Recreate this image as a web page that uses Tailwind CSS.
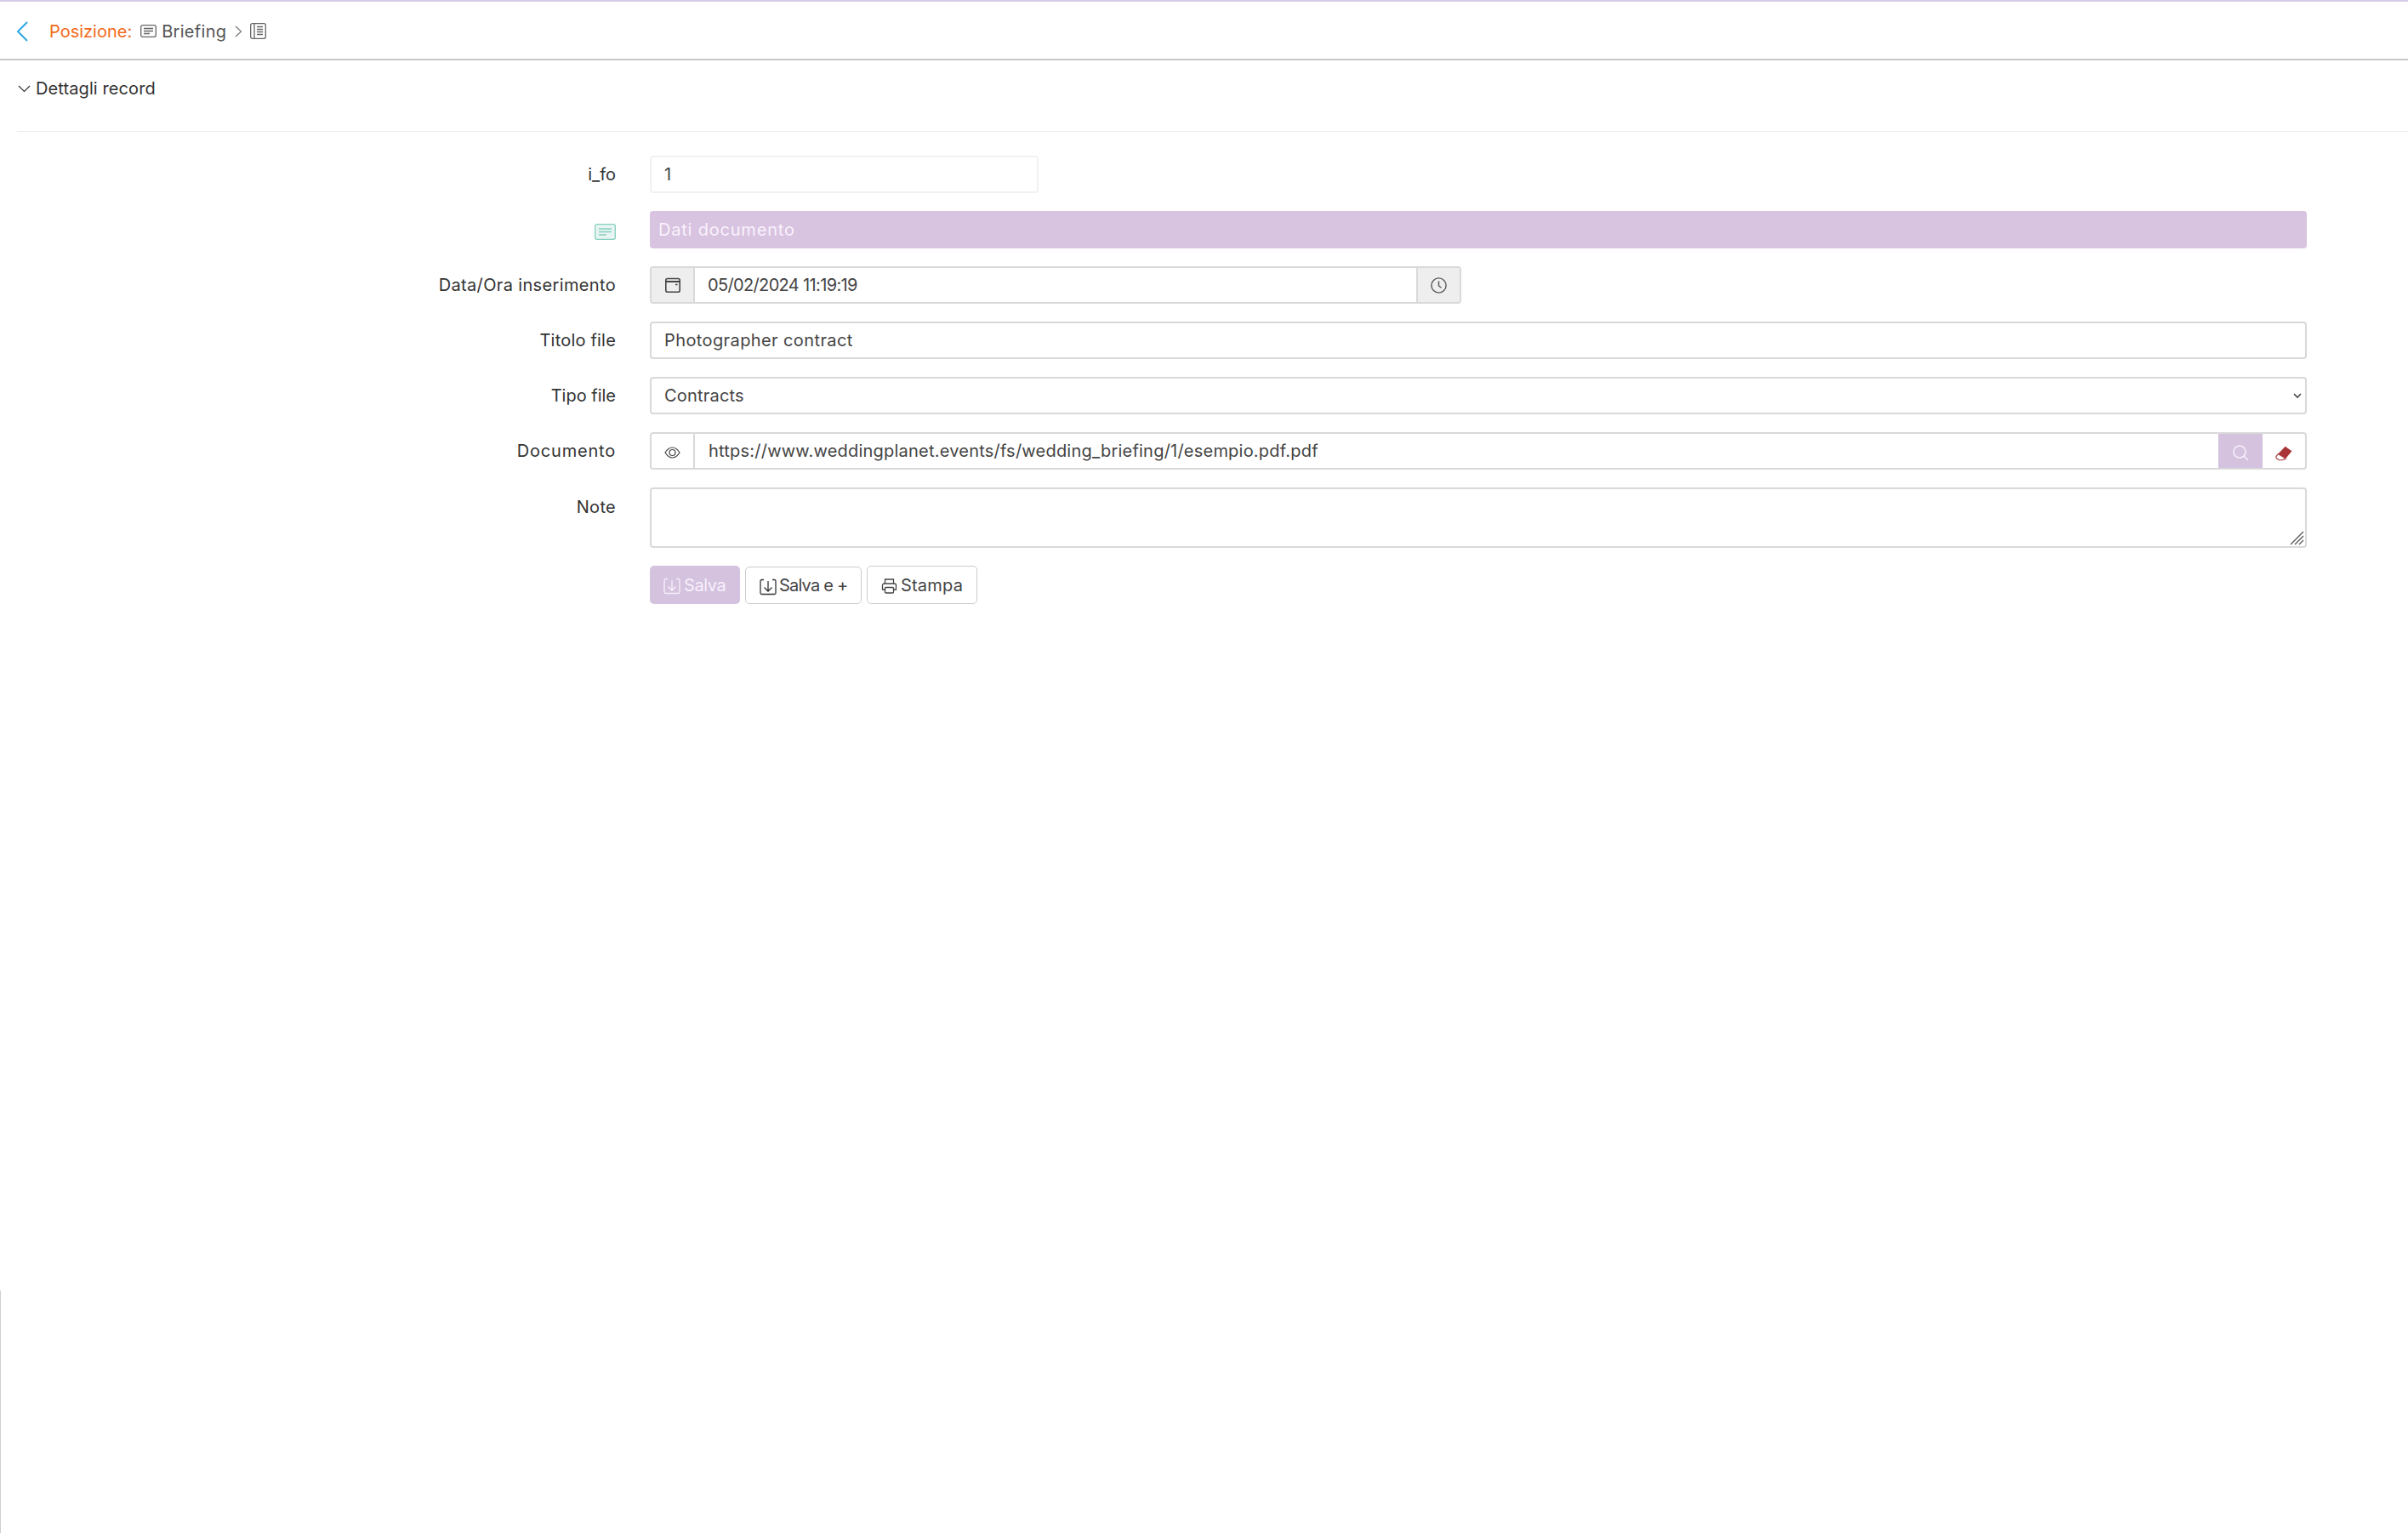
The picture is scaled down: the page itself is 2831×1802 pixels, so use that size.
<!DOCTYPE html>
<html lang="it">
<head>
  <meta charset="utf-8">
  <title>Briefing</title>
  <script src="https://cdn.jsdelivr.net/npm/@tailwindcss/browser@4"></script>
</head>
<body class="bg-white font-['Inter','Noto_Sans',sans-serif] text-[20px] text-[#444] min-h-[1802px] relative overflow-hidden">

  <!-- breadcrumb -->
  <header class="h-[71px] border-t-2 border-t-[#d5cbe6] border-b-2 border-b-[#c9c6cc] flex items-center pl-[19px] pt-[2px]">
    <svg class="w-[14px] h-[24px] mt-[1px]" viewBox="0 0 14 24" fill="none" stroke="#2ea8e0" stroke-width="2"><path d="M13 1 2 12l11 11"/></svg>
    <span class="ml-[25px] text-[#f26a1b]">Posizione:</span>
    <svg class="ml-[10px] w-[19px] h-[15px]" viewBox="0 0 19 15" fill="none" stroke="#666" stroke-width="1.3"><rect x=".7" y=".7" width="17.6" height="13.6" rx="2"/><path d="M4 4.500h11M4 7.500h11M4 10.500h7"/></svg>
    <span class="ml-[6px] text-[#555] tracking-[0.3px]">Briefing</span>
    <svg class="ml-[10px] w-[9px] h-[14px]" viewBox="0 0 9 14" fill="none" stroke="#777" stroke-width="1.2"><path d="m1 1 6.500 6L1 13"/></svg>
    <svg class="ml-[9px] w-[19px] h-[19px]" viewBox="0 0 19 19" fill="none" stroke="#666" stroke-width="1.3"><rect x=".7" y=".7" width="17.6" height="17.6" rx="2"/><path d="M5 1v17M8 4.500h7M8 7.500h7M8 10.500h7M8 13.500h7"/></svg>
  </header>

  <!-- section title -->
  <div class="ml-[20px] h-[84px] border-b border-[#eeeeee] flex items-start pt-[18px] text-[#333]">
    <svg class="mt-[11px] ml-[1px] w-[15px] h-[9px]" viewBox="0 0 15 9" fill="none" stroke="#333" stroke-width="1.2"><path d="m1 1 6.500 6.500L14 1"/></svg>
    <span class="ml-[6px] tracking-[0.1px]">Dettagli record</span>
  </div>

  <form class="mt-[28px] flex flex-col gap-[21px]">
    <div class="flex items-center gap-[40px]">
      <label class="w-[724px] text-right text-[#333]">i_fo</label>
      <input type="text" value="1" class="w-[457px] h-[44px] border-2 border-[#f1f1f1] rounded-[4px] px-[15px] outline-none text-[#444]">
    </div>

    <div class="flex items-center gap-[40px]">
      <div class="w-[724px] flex justify-end">
        <svg class="w-[25px] h-[19px] mt-[5px]" viewBox="0 0 25 19" fill="#e8f5f2" stroke="#86cfc0" stroke-width="1.3"><rect x=".7" y=".7" width="23.6" height="17.6" rx="2"/><path d="M5 6h15M5 9.500h15M5 13h9" fill="none"/></svg>
      </div>
      <div class="w-[1948px] h-[44px] bg-[#d8c3e0] rounded-[4px] pl-[10px] flex items-center text-[#f9f2fb] tracking-[0.8px]">Dati documento</div>
    </div>

    <div class="flex items-center gap-[40px]">
      <label class="w-[724px] text-right text-[#333] tracking-[0.35px]">Data/Ora inserimento</label>
      <div class="w-[954px] h-[44px] flex border-2 border-[#d9d9d9] rounded-[4px] overflow-hidden">
        <span class="w-[51px] bg-[#eeeeee] border-r-2 border-[#d9d9d9] flex items-center justify-center">
          <svg class="w-[18px] h-[18px]" viewBox="0 0 18 18" fill="none" stroke="#444" stroke-width="1.600"><rect x=".8" y="1.500" width="16.400" height="15.700" rx="2"/><path d="M1 5h16" stroke-width="2"/><path d="M12 8.500h2.500"/></svg>
        </span>
        <input type="text" value="05/02/2024 11:19:19" class="flex-1 min-w-0 px-[15px] outline-none text-[#444] tracking-[-0.65px]">
        <span class="w-[51px] bg-[#eeeeee] border-l-2 border-[#d9d9d9] flex items-center justify-center">
          <svg class="w-[19px] h-[19px]" viewBox="0 0 19 19" fill="none" stroke="#555" stroke-width="1.4"><circle cx="9.500" cy="9.500" r="8.600"/><path d="M9.500 4.500v5.500l3 2.200"/></svg>
        </span>
      </div>
    </div>

    <div class="flex items-center gap-[40px]">
      <label class="w-[724px] text-right text-[#333] tracking-[0.2px]">Titolo file</label>
      <input type="text" value="Photographer contract" class="w-[1948px] h-[44px] border-2 border-[#d9d9d9] rounded-[4px] px-[15px] outline-none text-[#444] tracking-[0.4px]">
    </div>

    <div class="flex items-center gap-[40px]">
      <label class="w-[724px] text-right text-[#333]">Tipo file</label>
      <div class="w-[1948px] h-[44px] relative">
        <select class="w-full h-full appearance-none border-2 border-[#d9d9d9] rounded-[4px] px-[15px] outline-none text-[#444] bg-white tracking-[0.2px]">
          <option>Contracts</option>
        </select>
        <svg class="absolute right-[6px] top-[19px] w-[10px] h-[7px]" viewBox="0 0 10 7" fill="none" stroke="#444" stroke-width="1.6"><path d="m1 1 4 4 4-4"/></svg>
      </div>
    </div>

    <div class="flex items-center gap-[40px]">
      <label class="w-[724px] text-right text-[#333] tracking-[0.8px]">Documento</label>
      <div class="w-[1948px] h-[44px] flex border-2 border-[#d9d9d9] rounded-[4px] overflow-hidden">
        <span class="w-[51px] border-r-2 border-[#d9d9d9] flex items-center justify-center">
          <svg class="w-[19px] h-[14px] mt-[4px]" viewBox="0 0 19 14" fill="none" stroke="#444" stroke-width="1.2"><path d="M1 7c2.500-4 5-6 8.500-6S15.500 3 18 7c-2.500 4-5 6-8.500 6S3.500 11 1 7Z"/><circle cx="9.500" cy="7" r="3.500"/></svg>
        </span>
        <input type="text" value="https://www.weddingplanet.events/fs/wedding_briefing/1/esempio.pdf.pdf" class="flex-1 min-w-0 px-[16px] outline-none text-[#444] tracking-[0.22px]">
        <span class="w-[52px] bg-[#d4c2de] flex items-center justify-center">
          <svg class="w-[19px] h-[19px] mt-[4px]" viewBox="0 0 19 19" fill="none" stroke="#f8f0fb" stroke-width="1.600"><circle cx="8" cy="8" r="7"/><path d="m13 13 5 5"/></svg>
        </span>
        <span class="w-[50px] flex items-center justify-center">
          <svg class="w-[20px] h-[18px] mt-[5px]" viewBox="0 0 18 16"><path d="M10.500.500 17.500 5.500 11 13.500 3 8.500Z" fill="#a83438"/><path d="M3 8.500 1 11c-.5 1 0 2 1 2.800l2 1.200h3.500L11 13.500Z" fill="#fff" stroke="#a83438" stroke-width="1"/></svg>
        </span>
      </div>
    </div>

    <div class="flex items-start gap-[40px]">
      <label class="w-[724px] text-right text-[#333] pt-[8px] tracking-[0.3px]">Note</label>
      <div class="relative w-[1948px] h-[71px]">
        <textarea class="block w-full h-full resize-none border-2 border-[#d9d9d9] rounded-[4px] px-[15px] py-[6px] outline-none"></textarea>
        <!-- resize grip -->
        <svg class="absolute right-[3px] bottom-[3px] w-[17px] h-[17px]" viewBox="0 0 17 17" fill="none" stroke="#555" stroke-width="1.300"><path d="M1 16 16 1M6 16 16 6M11 16l5-5"/></svg>
      </div>
    </div>

    <div class="flex items-center gap-[6px] ml-[764px] h-[45px]">
      <button type="button" class="w-[106px] h-[45px] bg-[#d4c2de] rounded-[5px] flex items-center pl-[16px] text-[#f8f0fb]">
        <svg class="w-[20px] h-[20px] mt-[2px]" viewBox="0 0 20 20" fill="none" stroke="#f8f0fb" stroke-width="1.300"><path d="M5 1.500H2.500a1.500 1.500 0 0 0-1.500 1.500v14a1.500 1.500 0 0 0 1.500 1.500h15a1.500 1.500 0 0 0 1.500-1.500V3a1.500 1.500 0 0 0-1.500-1.500H15M10 3v12M5.500 10.500 10 15l4.500-4.500"/></svg>
        <span class="ml-[4px] tracking-[-0.4px]">Salva</span>
      </button>
      <button type="button" class="w-[137px] h-[44px] border border-[#cccccc] rounded-[5px] flex items-center pl-[16px] text-[#444]">
        <svg class="w-[20px] h-[20px] mt-[4px]" viewBox="0 0 20 20" fill="none" stroke="#333" stroke-width="1.300"><path d="M5 1.500H2.500a1.500 1.500 0 0 0-1.500 1.500v14a1.500 1.500 0 0 0 1.500 1.500h15a1.500 1.500 0 0 0 1.500-1.500V3a1.500 1.500 0 0 0-1.500-1.500H15M10 3v12M5.500 10.500 10 15l4.500-4.500"/></svg>
        <span class="ml-[3px] tracking-[-0.8px]">Salva e +</span>
      </button>
      <button type="button" class="w-[130px] h-[45px] border border-[#cccccc] rounded-[5px] flex items-center pl-[16px] text-[#444]">
        <svg class="w-[19px] h-[18px] mt-[3px]" viewBox="0 0 19 18" fill="none" stroke="#444" stroke-width="1.300"><path d="M4.500 6V1h10v5M4.500 13H1.500V8a2 2 0 0 1 2-2h12a2 2 0 0 1 2 2v5h-3"/><rect x="4.500" y="10.500" width="10" height="6.500" rx="1"/></svg>
        <span class="ml-[4px] tracking-[0.2px]">Stampa</span>
      </button>
    </div>
  </form>

  <!-- leftover edge line -->
  <div class="absolute left-0 top-[1517px] bottom-0 w-[1px] bg-[#cfcfcf]"></div>
</body>
</html>
